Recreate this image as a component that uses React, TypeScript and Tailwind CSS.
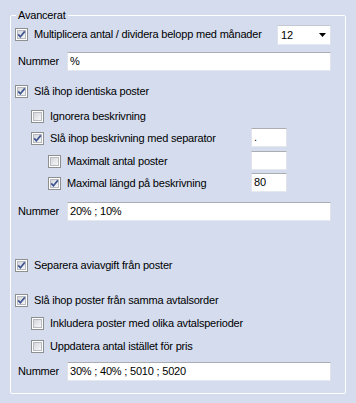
import React from "react";

function Check({ checked }: { checked?: boolean }) {
  return (
    <span className="relative flex h-[13px] w-[13px] shrink-0 items-center justify-center border border-[#8e8f8f] bg-white">
      <span className="h-[9px] w-[9px] border border-[#b7bbc1] bg-gradient-to-br from-[#d3d6db] to-[#f7f7f7]" />
      {checked && (
        <svg className="absolute left-0 top-0" width="11" height="11" viewBox="0 0 11 11">
          <path d="M2.2 5.4 L4.4 7.8 L8.8 2.4" fill="none" stroke="#3f5591" strokeWidth="1.7" />
        </svg>
      )}
    </span>
  );
}

function Input({ value, className }: { value?: string; className: string }) {
  return (
    <div
      className={
        "flex h-[19px] items-center border border-t-[#abadb3] border-l-[#e2e3ea] border-r-[#e2e3ea] border-b-[#e3e9ef] bg-white pl-[2px] text-black " +
        className
      }
    >
      {value}
    </div>
  );
}

export default function App() {
  return (
    <div className="h-[403px] w-[356px] bg-[#d4dcee] pl-[10px] pt-[15px] font-['Liberation_Sans',Arial,sans-serif] text-[11px] leading-[13px] tracking-[-0.2px] text-black">
      <div className="relative flex h-[379px] w-[336px] flex-col rounded-[2px] border border-white pl-[4px] pr-[14px]">
        <span className="absolute left-[5px] top-[-7px] bg-[#d4dcee] px-[2px]">Avancerat</span>

        {/* Row A */}
        <div className="mt-[9px] flex h-[20px] items-start">
          <div className="mt-[3px]">
            <Check checked />
          </div>
          <span className="ml-[6px] mt-[3px]">Multiplicera antal / dividera belopp med månader</span>
          <div className="ml-auto flex h-[20px] w-[54px] items-center justify-between border border-t-[#c3c8d2] border-l-[#dde2ec] border-r-[#dde2ec] border-b-[#e3e9ef] bg-white pl-[3px] pr-[4px]">
            <span>12</span>
            <svg width="7" height="4" viewBox="0 0 7 4">
              <polygon points="0,0 7,0 3.5,4" fill="#000" />
            </svg>
          </div>
        </div>

        {/* Row B */}
        <div className="mt-[7px] flex h-[19px] items-center">
          <span className="ml-[3px] w-[49px]">Nummer</span>
          <Input value="%" className="flex-1" />
        </div>

        {/* Row C */}
        <div className="mt-[11px] flex h-[19px] items-center">
          <Check checked />
          <span className="ml-[6px]">Slå ihop identiska poster</span>
        </div>

        {/* Row D */}
        <div className="mt-[6px] flex h-[19px] items-center pl-[16px]">
          <Check />
          <span className="ml-[6px]">Ignorera beskrivning</span>
        </div>

        {/* Row E */}
        <div className="mt-[2px] flex h-[19px] items-start pl-[16px]">
          <div className="mt-[4px]">
            <Check checked />
          </div>
          <span className="ml-[6px] mt-[4px]">Slå ihop beskrivning med separator</span>
          <Input value="." className="ml-auto mr-[44px] w-[36px]" />
        </div>

        {/* Row F */}
        <div className="mt-[4px] flex h-[19px] items-start pl-[33px]">
          <div className="mt-[4px]">
            <Check />
          </div>
          <span className="ml-[6px] mt-[4px]">Maximalt antal poster</span>
          <Input value="" className="ml-auto mr-[44px] w-[36px]" />
        </div>

        {/* Row G */}
        <div className="mt-[3px] flex h-[19px] items-start pl-[33px]">
          <div className="mt-[4px]">
            <Check checked />
          </div>
          <span className="ml-[6px] mt-[4px]">Maximal längd på beskrivning</span>
          <Input value="80" className="ml-auto mr-[44px] w-[36px]" />
        </div>

        {/* Row H */}
        <div className="mt-[10px] flex h-[19px] items-center">
          <span className="ml-[3px] w-[49px]">Nummer</span>
          <Input value="20% ; 10%" className="flex-1" />
        </div>

        {/* Row I */}
        <div className="mt-[35px] flex h-[19px] items-center">
          <Check checked />
          <span className="ml-[6px]">Separera aviavgift från poster</span>
        </div>

        {/* Row J */}
        <div className="mt-[16px] flex h-[19px] items-center">
          <Check checked />
          <span className="ml-[6px]">Slå ihop poster från samma avtalsorder</span>
        </div>

        {/* Row K */}
        <div className="mt-[4px] flex h-[19px] items-center pl-[16px]">
          <Check />
          <span className="ml-[6px]">Inkludera poster med olika avtalsperioder</span>
        </div>

        {/* Row L */}
        <div className="mt-[4px] flex h-[19px] items-center pl-[16px]">
          <Check />
          <span className="ml-[6px]">Uppdatera antal istället för pris</span>
        </div>

        {/* Row M */}
        <div className="mt-[6px] flex h-[19px] items-center">
          <span className="ml-[3px] w-[49px]">Nummer</span>
          <Input value="30% ; 40% ; 5010 ; 5020" className="flex-1" />
        </div>
      </div>
    </div>
  );
}
